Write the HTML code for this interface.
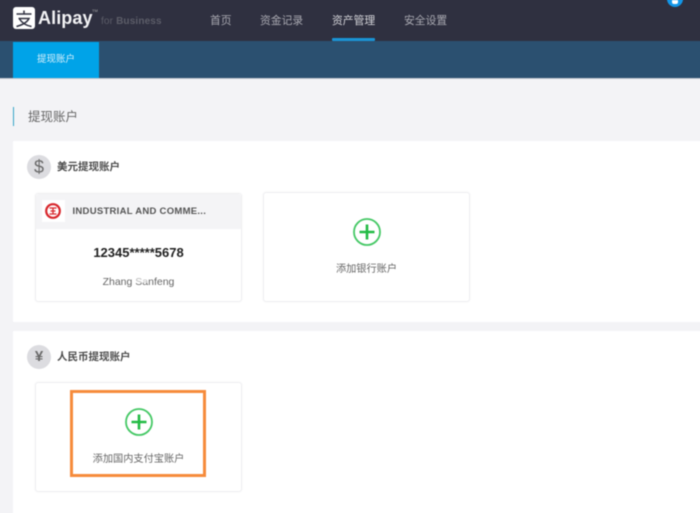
<!DOCTYPE html>
<html><head><meta charset="utf-8">
<style>
html,body{margin:0;padding:0;width:700px;height:513px;overflow:hidden;background:#f3f3f6}
body{position:relative;font-family:"Liberation Sans","Noto Sans CJK SC",sans-serif;color:#444}
#w{position:absolute;left:0;top:0;width:700px;height:513px;filter:blur(.4px)}
.a{position:absolute;white-space:nowrap}
.nav{font-size:10.8px;color:#a9a9b1;top:14px;line-height:14px}
.card{position:absolute;background:#fff;border:1px solid #efeff1;border-radius:3px;box-sizing:border-box;box-shadow:0 0 2px rgba(0,0,0,.04)}
.sec{position:absolute;left:13px;width:690px;background:#fff}
.ci{position:absolute;width:24px;height:24px;border-radius:50%;background:#dcdce0;color:#6a6a6a;text-align:center;line-height:24px;left:27px}
.h{font-size:10.5px;color:#4c4c4c;font-weight:bold;line-height:14px;left:57px}
.lab{font-size:10.2px;color:#666;line-height:14px;text-align:center}
</style></head><body><div id="w">
<div class="a" style="left:-3px;top:-3px;width:706px;height:44px;background:#2f3040"></div>
<div class="a" style="left:-3px;top:41px;width:706px;height:37px;background:#2b5070;border-bottom:1px solid #c4c8cf"></div>
<svg class="a" style="left:13px;top:7px" width="22" height="22" viewBox="0 0 22 22"><rect width="22" height="22" rx="3" fill="#fff"/><path d="M3.5 7H18.5M11 3.5V7M5.5 11.5H16C14 15.5 9 18 3.5 19.5M6.5 12C9 16 13 18.5 18.5 19.5" stroke="#2f3040" stroke-width="1.5" fill="none"/></svg>
<div class="a" style="left:38px;top:5px;font-size:18px;font-weight:bold;color:#f2f2f4;line-height:26px;letter-spacing:.1px">Alipay</div>
<div class="a" style="left:92px;top:8px;font-size:4px;color:#aaa;line-height:5px">TM</div>
<div class="a" style="left:101px;top:15px;font-size:10px;color:#5c5d68;line-height:13px;letter-spacing:.15px">for <b>Business</b></div>
<div class="a nav" style="left:210px">首页</div>
<div class="a nav" style="left:260px">资金记录</div>
<div class="a nav" style="left:332px;color:#d4d4d9">资产管理</div>
<div class="a nav" style="left:404px">安全设置</div>
<div class="a" style="left:332px;top:38px;width:43px;height:3px;background:#1a94d6;border-radius:1px"></div>
<div class="a" style="left:667px;top:-9px;width:16px;height:16px;border-radius:50%;background:#1296e8"></div>
<div class="a" style="left:672px;top:0;width:6px;height:4px;background:#fff;border-radius:0 0 2px 2px"></div>
<div class="a" style="left:13px;top:42px;width:86px;height:36px;background:#00a3e8;color:#d8f0fb;font-size:9.5px;text-align:center;line-height:36px">提现账户</div>
<div class="a" style="left:13px;top:107px;width:1px;height:19px;background:#35a4c8"></div>
<div class="a" style="left:28px;top:109px;font-size:12.5px;color:#666;line-height:17px">提现账户</div>

<div class="sec" style="top:141px;height:181px"></div>
<div class="sec" style="top:331px;height:185px"></div>

<div class="ci" style="top:155px;font-size:18px">$</div>
<div class="a h" style="top:160px">美元提现账户</div>

<div class="card" style="left:35px;top:193px;width:207px;height:109px">
  <div style="position:absolute;left:0;top:0;width:205px;height:35px;background:#f4f4f6;border-radius:3px 3px 0 0"></div>
</div>
<div class="a" style="left:42px;top:200px;width:23px;height:22px;background:#fff"></div>
<svg class="a" style="left:45px;top:203px" width="16" height="16" viewBox="0 0 16 16"><circle cx="8" cy="8" r="6.8" fill="none" stroke="#d8262c" stroke-width="2.2"/><path d="M4.5 5H11.5M4.5 11H11.5M5.5 8H10.5M8 5V11" stroke="#d8262c" stroke-width="1.3" fill="none"/></svg>
<div class="a" style="left:72.5px;top:205px;font-size:9.5px;font-weight:bold;color:#555;line-height:13px;letter-spacing:.28px">INDUSTRIAL AND COMME...</div>
<div class="a" style="left:35px;width:207px;top:245px;text-align:center;font-size:13px;font-weight:bold;color:#222;line-height:15px">12345*****5678</div>
<div class="a" style="left:35px;width:207px;top:275px;text-align:center;font-size:10.5px;color:#666;line-height:14px">Zhang Sanfeng</div>
<div class="a" style="left:136px;top:277px;width:12px;height:6px;background:rgba(255,255,255,.55)"></div>

<div class="card" style="left:263px;top:192px;width:207px;height:110px"></div>
<svg class="a" style="left:353px;top:218px" width="28" height="28" viewBox="0 0 28 28"><circle cx="14" cy="14" r="13" fill="none" stroke="#45c865" stroke-width="1.8"/><path d="M14 6.5V21.5M6.5 14H21.5" stroke="#22bb44" stroke-width="2.6"/></svg>
<div class="a lab" style="left:263px;width:207px;top:263px">添加银行账户</div>

<div class="ci" style="top:345px;font-size:15px;font-weight:bold">¥</div>
<div class="a h" style="top:350px">人民币提现账户</div>

<div class="card" style="left:35px;top:382px;width:207px;height:110px"></div>
<svg class="a" style="left:125px;top:408px" width="28" height="28" viewBox="0 0 28 28"><circle cx="14" cy="14" r="13" fill="none" stroke="#45c865" stroke-width="1.8"/><path d="M14 6.5V21.5M6.5 14H21.5" stroke="#22bb44" stroke-width="2.6"/></svg>
<div class="a lab" style="left:35px;width:207px;top:453px">添加国内支付宝账户</div>
<div class="a" style="left:70px;top:390px;width:136px;height:87px;box-sizing:border-box;border:3px solid #f68b3c"></div>
</div></body></html>
